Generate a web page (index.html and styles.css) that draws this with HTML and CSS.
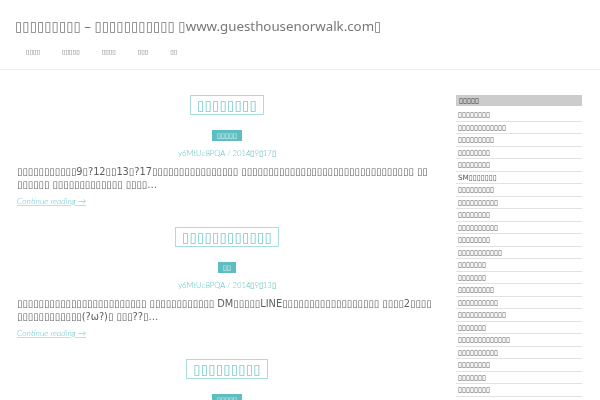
FILE: index.html
```html
<!DOCTYPE html>
<html lang="ja">
<head>
<meta charset="utf-8">
<title>guesthousenorwalk</title>
<link rel="stylesheet" href="styles.css">
</head>
<body>
<div class="page">
<header class="site-header">
  <h1 class="site-title">▯▯▯▯▯▯▯▯▯ – ▯▯▯▯▯▯▯▯▯▯▯ ▯www.guesthousenorwalk.com▯</h1>
  <nav class="main-nav">
    <a href="#">▯▯▯▯</a><a href="#">▯▯▯▯▯</a><a href="#">▯▯▯▯</a><a href="#">▯▯▯</a><a href="#">▯▯</a>
  </nav>
</header>
<div class="site-main">
  <main class="content">
    <article class="post">
      <header class="entry-header">
        <h2 class="entry-title"><a href="#">▯▯▯▯▯▯▯▯</a></h2>
        <div class="cat-row"><span class="cat">▯▯▯▯▯</span></div>
        <div class="meta">y6MtUe8PQA / 2014▯9▯17▯</div>
      </header>
      <p class="excerpt">▯▯▯▯▯▯▯▯▯▯▯9▯?12▯▯13▯?17▯▯▯▯▯▯▯▯▯▯▯▯▯▯▯▯ ▯▯▯▯▯▯▯▯▯▯▯▯▯▯▯▯▯▯▯▯▯▯▯▯▯▯▯▯▯▯▯▯ ▯▯ ▯▯▯▯▯▯ ▯▯▯▯▯▯▯▯▯▯▯▯▯ ▯▯▯▯…</p>
      <a class="more" href="#">Continue reading →</a>
    </article>
    <article class="post">
      <header class="entry-header">
        <h2 class="entry-title"><a href="#">▯▯▯▯▯▯▯▯▯▯▯▯</a></h2>
        <div class="cat-row"><span class="cat">▯▯</span></div>
        <div class="meta">y6MtUe8PQA / 2014▯9▯13▯</div>
      </header>
      <p class="excerpt">▯▯▯▯▯▯▯▯▯▯▯▯▯▯▯▯▯▯▯▯▯▯▯▯ ▯▯▯▯▯▯▯▯▯▯▯▯ DM▯▯▯▯▯LINE▯▯▯▯▯▯▯▯▯▯▯▯▯▯▯▯▯▯ ▯▯▯▯2▯▯▯▯ ▯▯▯▯▯▯▯▯▯▯▯▯(?ω?)▯ ▯▯▯??▯…</p>
      <a class="more" href="#">Continue reading →</a>
    </article>
    <article class="post">
      <header class="entry-header">
        <h2 class="entry-title"><a href="#">▯▯▯▯▯▯▯▯▯</a></h2>
        <div class="cat-row"><span class="cat">▯▯▯▯▯</span></div>
      </header>
    </article>
  </main>
  <aside class="sidebar">
    <h3 class="widget-title">▯▯▯▯▯</h3>
    <ul class="widget-list">
      <li>▯▯▯▯▯▯▯▯</li>
      <li>▯▯▯▯▯▯▯▯▯▯▯▯</li>
      <li>▯▯▯▯▯▯▯▯▯</li>
      <li>▯▯▯▯▯▯▯▯</li>
      <li>▯▯▯▯▯▯▯▯</li>
      <li>SM▯▯▯▯▯▯▯</li>
      <li>▯▯▯▯▯▯▯▯▯</li>
      <li>▯▯▯▯▯▯▯▯▯▯</li>
      <li>▯▯▯▯▯▯▯▯</li>
      <li>▯▯▯▯▯▯▯▯▯▯</li>
      <li>▯▯▯▯▯▯▯▯</li>
      <li>▯▯▯▯▯▯▯▯▯▯▯</li>
      <li>▯▯▯▯▯▯▯</li>
      <li>▯▯▯▯▯▯▯</li>
      <li>▯▯▯▯▯▯▯▯▯</li>
      <li>▯▯▯▯▯▯▯▯▯▯</li>
      <li>▯▯▯▯▯▯▯▯▯▯▯▯</li>
      <li>▯▯▯▯▯▯▯</li>
      <li>▯▯▯▯▯▯▯▯▯▯▯▯▯</li>
      <li>▯▯▯▯▯▯▯▯▯▯</li>
      <li>▯▯▯▯▯▯▯▯</li>
      <li>▯▯▯▯▯▯▯</li>
      <li>▯▯▯▯▯▯▯▯</li>
    </ul>
  </aside>
</div>
</div>
</body>
</html>
```
FILE: styles.css
```css
html, body {
  margin: 0;
  padding: 0;
  background: #fff;
}
body {
  font-family: "DejaVu Sans", sans-serif;
  color: #666;
  overflow: hidden;
  height: 400px;
}
.page {
  will-change: transform;
}
a { text-decoration: none; }

.site-header {
  padding: 0 15px 10px;
  border-bottom: 1px solid #ececec;
}
.site-title {
  margin: 13px 0 0;
  font-family: "Noto Sans", "DejaVu Sans", sans-serif;
  font-weight: 400;
  font-size: 13.3px;
  line-height: 26px;
  color: #777;
  white-space: nowrap;
}
.main-nav {
  margin-top: 6px;
  display: flex;
  height: 14px;
  align-items: center;
}
.main-nav a {
  padding: 0 11px;
  font-size: 6.4px;
  line-height: 14px;
  color: #777;
}

.site-main {
  display: flex;
  gap: 17px;
  padding: 0 18px 0 15px;
}
.content {
  flex: 1;
  min-width: 0;
  padding-top: 25px;
}
.post {
  margin-bottom: 20px;
}
.entry-header {
  text-align: center;
}
.entry-title {
  display: inline-block;
  margin: 0;
  border: 1px solid #a9dcdf;
  padding: 0 6px;
  font-weight: 400;
  font-size: 13.6px;
  line-height: 18px;
}
.entry-title a {
  color: #79c9cd;
}
.cat-row {
  margin-top: 15px;
  height: 11px;
}
.cat {
  display: inline-block;
  height: 11px;
  padding: 0 5px;
  background: #5dbdc1;
  color: #eef9fa;
  font-size: 7.2px;
  line-height: 11px;
  vertical-align: top;
}
.meta {
  margin-top: 6px;
  font-family: "Lato", "DejaVu Sans", sans-serif;
  font-weight: 300;
  font-size: 7.7px;
  line-height: 12px;
  color: #5fbcc1;
}
.excerpt {
  margin: 7px 0 0;
  padding-left: 2px;
  font-size: 9.8px;
  line-height: 12.5px;
  color: #5e5e5e;
}
.more {
  display: block;
  margin-top: 4px;
  padding-left: 2px;
  font-family: "Lato", "DejaVu Sans", sans-serif;
  font-style: italic;
  font-weight: 300;
  font-size: 8.5px;
  line-height: 12px;
  color: #6cc6ca;
  text-decoration: underline;
  text-decoration-color: #b6e2e4;
}

.sidebar {
  width: 126px;
  flex: none;
  padding-top: 25px;
}
.widget-title {
  margin: 0;
  height: 11px;
  padding-left: 3px;
  background: #cccccc;
  font-weight: 400;
  font-size: 7.25px;
  line-height: 11px;
  color: #333;
}
.widget-list {
  list-style: none;
  margin: 3px 0 0;
  padding: 0;
}
.widget-list li {
  padding-left: 2px;
  font-size: 7.25px;
  line-height: 11.5px;
  border-bottom: 1px solid #e2e2e2;
  color: #555;
  white-space: nowrap;
}
```
